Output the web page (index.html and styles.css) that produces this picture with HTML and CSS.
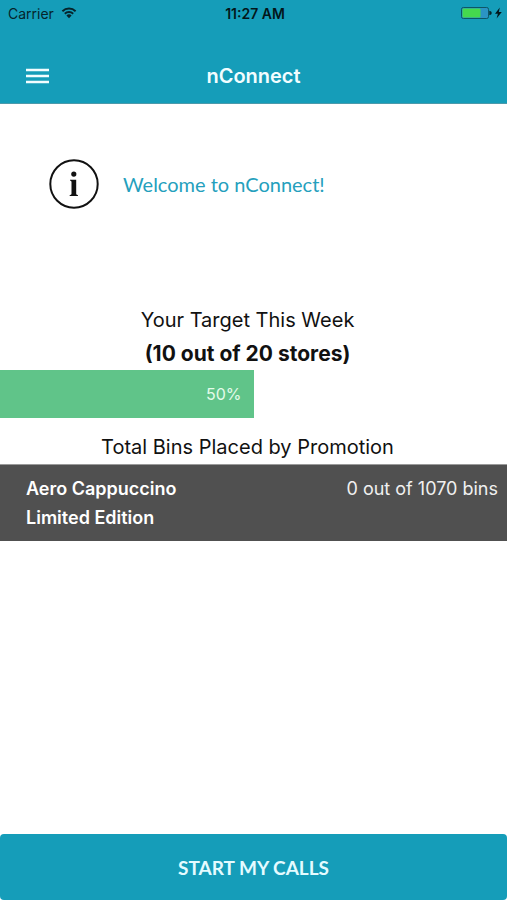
FILE: index.html
```html
<!DOCTYPE html>
<html lang="en">
<head>
<meta charset="utf-8">
<meta name="viewport" content="width=device-width, initial-scale=1">
<title>nConnect</title>
<link rel="stylesheet" href="styles.css">
</head>
<body>
<div class="app">
  <header class="header">
    <div class="status">
      <div class="status-left">
        <span>Carrier</span>
        <svg class="wifi" viewBox="0 0 16 12" width="16" height="12" aria-hidden="true">
          <path d="M1.4 4.2a9.6 9.6 0 0 1 13.2 0M3.8 6.7a6.1 6.1 0 0 1 8.4 0" fill="none" stroke="#06242b" stroke-width="1.9"/>
          <path d="M5.4 8.4a3.8 3.8 0 0 1 5.2 0L8 11.2z" fill="#06242b"/>
        </svg>
      </div>
      <time class="clock">11:27 AM</time>
      <div class="status-right">
        <svg viewBox="0 0 42 14" width="42" height="14" aria-hidden="true">
          <rect x="1.5" y="1.500" width="27" height="11" rx="1.8" fill="#2b94c4" stroke="#0d5666" stroke-width="1"/>
          <rect x="2.5" y="2.500" width="18" height="9" rx="1" fill="#45d94d"/>
          <path d="M29.300 4.800q2.500.2 2.500 2.200t-2.500 2.200z" fill="#06242b"/>
          <path d="M39.800 1.500L35 7.800h2.900L36.600 12.500l5.200-6.600h-3z" fill="#03161a"/>
        </svg>
      </div>
    </div>
    <div class="navbar">
      <button class="menu" type="button" aria-label="Menu">
        <svg viewBox="0 0 24 16" width="24" height="16" aria-hidden="true">
          <path d="M1 2h23M1 8h23M1 14h23" stroke="#f2fdff" stroke-width="2.6"/>
        </svg>
      </button>
      <h1 class="title">nConnect</h1>
    </div>
  </header>

  <main class="main">
    <section class="welcome">
      <svg viewBox="0 0 50 50" width="50" height="50" aria-hidden="true">
        <circle cx="25" cy="25" r="23.7" fill="none" stroke="#111" stroke-width="2"/>
        <circle cx="24.8" cy="15.1" r="2.6" fill="#111"/>
        <path d="M21 20.7h6.200v14q0 1.200 1.700 1.300v.9h-8.200V36q1.800-.1 1.800-1.300V23q0-1.300-1.500-1.400z" fill="#111"/>
      </svg>
      <p class="welcome-text">Welcome to nConnect!</p>
    </section>

    <section class="target">
      <h2 class="heading">Your Target This Week</h2>
      <p class="heading strong">(10 out of 20 stores)</p>
      <div class="progress"><div class="progress-fill" style="width: 50%">50%</div></div>
    </section>

    <section class="bins">
      <h2 class="heading">Total Bins Placed by Promotion</h2>
      <div class="promo">
        <h3 class="promo-name">Aero Cappuccino Limited Edition</h3>
        <p class="promo-count">0 out of 1070 bins</p>
      </div>
    </section>
  </main>

  <button class="start" type="button">START MY CALLS</button>
</div>
</body>
</html>
```
FILE: styles.css
```css
* {
  box-sizing: border-box;
  margin: 0;
}

body {
  background: #fff;
  color: #111;
  font-family: Inter, "Liberation Sans", sans-serif;
}

.app {
  display: flex;
  flex-direction: column;
  min-height: 100vh;
}

.header {
  background: #159db9;
  border-bottom: 1px solid #4c9aab;
}

.status {
  display: grid;
  grid-template-columns: 1fr auto 1fr;
  align-items: center;
  height: 26px;
  padding: 0 5px 0 8px;
  color: #06242b;
  font-size: 14px;
}

.status-left {
  display: flex;
  align-items: center;
  gap: 7px;
}

.clock {
  color: #03161a;
  font-weight: 600;
}

.status-right {
  display: flex;
  justify-content: flex-end;
}

.navbar {
  display: grid;
  grid-template-columns: 1fr auto 1fr;
  align-items: center;
  height: 77px;
  padding: 30px 25px 8px;
}

.menu {
  display: flex;
  justify-self: start;
  padding: 0;
  border: 0;
  background: none;
}

.title {
  color: #f2fdff;
  font-size: 20px;
  font-weight: 600;
}

.main {
  flex: 1;
}

.welcome {
  display: flex;
  align-items: center;
  gap: 24px;
  padding: 55px 49px;
}

.welcome-text {
  color: #259fbd;
  font-family: Lato, sans-serif;
  font-size: 20px;
  line-height: 24px;
}

.target {
  padding-top: 40px;
}

.heading {
  padding-right: 12px;
  font-size: 20px;
  font-weight: 400;
  line-height: 33px;
  text-align: center;
}

.strong {
  font-size: 21px;
  font-weight: 700;
}

.progress-fill {
  height: 48px;
  padding-right: 12px;
  background: #60c489;
  color: #e4fbea;
  font-size: 16px;
  line-height: 48px;
  text-align: right;
}

.bins {
  padding-top: 13px;
}

.promo {
  display: flex;
  justify-content: space-between;
  align-items: flex-start;
  gap: 16px;
  padding: 9px 9px 9px 26px;
  border-top: 1px solid #9a9a9a;
  background: #505050;
  color: #f0f0f0;
  font-size: 18px;
  line-height: 29px;
}

.promo-name {
  width: 50%;
  max-width: 200px;
  color: #fff;
  font-size: 18px;
  font-weight: 600;
}

.promo-count {
  white-space: nowrap;
}

.start {
  height: 66px;
  border: 0;
  border-radius: 4px;
  background: #159db9;
  color: #e4fbff;
  font-family: Lato, sans-serif;
  font-size: 19px;
  font-weight: 700;
}
```
